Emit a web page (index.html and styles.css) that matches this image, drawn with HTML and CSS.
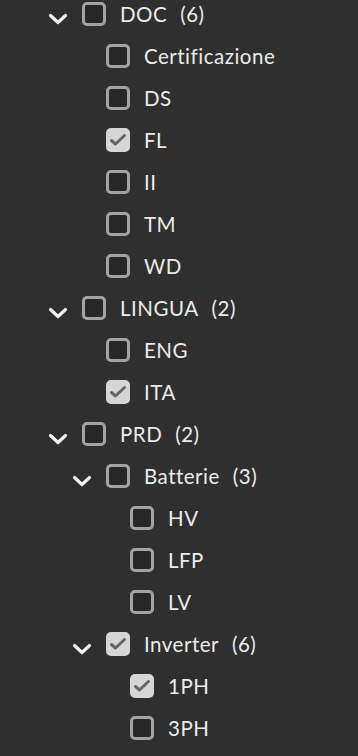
FILE: index.html
```html
<!DOCTYPE html>
<html lang="it">
<head>
<meta charset="utf-8">
<title>Filtri</title>
<link rel="stylesheet" href="styles.css">
</head>
<body>
<div class="tree">
  <div class="row l0"><span class="chev"><svg viewBox="0 0 20 12" width="20" height="12"><path d="M2.5 2.5 L10 9.5 L17.5 2.5" /></svg></span><span class="box"></span><span class="label">DOC<span class="count">(6)</span></span></div>
  <div class="row l1"><span class="slot"></span><span class="box"></span><span class="label">Certificazione</span></div>
  <div class="row l1"><span class="slot"></span><span class="box"></span><span class="label">DS</span></div>
  <div class="row l1"><span class="slot"></span><span class="box on"><svg viewBox="0 0 18 18" width="18" height="18"><path d="M2.5 9.5 L6.5 13 L15.5 4.5"/></svg></span><span class="label">FL</span></div>
  <div class="row l1"><span class="slot"></span><span class="box"></span><span class="label">II</span></div>
  <div class="row l1"><span class="slot"></span><span class="box"></span><span class="label">TM</span></div>
  <div class="row l1"><span class="slot"></span><span class="box"></span><span class="label">WD</span></div>
  <div class="row l0"><span class="chev"><svg viewBox="0 0 20 12" width="20" height="12"><path d="M2.5 2.5 L10 9.5 L17.5 2.5" /></svg></span><span class="box"></span><span class="label">LINGUA<span class="count">(2)</span></span></div>
  <div class="row l1"><span class="slot"></span><span class="box"></span><span class="label">ENG</span></div>
  <div class="row l1"><span class="slot"></span><span class="box on"><svg viewBox="0 0 18 18" width="18" height="18"><path d="M2.5 9.5 L6.5 13 L15.5 4.5"/></svg></span><span class="label">ITA</span></div>
  <div class="row l0"><span class="chev"><svg viewBox="0 0 20 12" width="20" height="12"><path d="M2.5 2.5 L10 9.5 L17.5 2.5" /></svg></span><span class="box"></span><span class="label">PRD<span class="count">(2)</span></span></div>
  <div class="row l1"><span class="chev"><svg viewBox="0 0 20 12" width="20" height="12"><path d="M2.5 2.5 L10 9.5 L17.5 2.5" /></svg></span><span class="box"></span><span class="label">Batterie<span class="count">(3)</span></span></div>
  <div class="row l2"><span class="slot"></span><span class="box"></span><span class="label">HV</span></div>
  <div class="row l2"><span class="slot"></span><span class="box"></span><span class="label">LFP</span></div>
  <div class="row l2"><span class="slot"></span><span class="box"></span><span class="label">LV</span></div>
  <div class="row l1"><span class="chev"><svg viewBox="0 0 20 12" width="20" height="12"><path d="M2.5 2.5 L10 9.5 L17.5 2.5" /></svg></span><span class="box on"><svg viewBox="0 0 18 18" width="18" height="18"><path d="M2.5 9.5 L6.5 13 L15.5 4.5"/></svg></span><span class="label">Inverter<span class="count">(6)</span></span></div>
  <div class="row l2"><span class="slot"></span><span class="box on"><svg viewBox="0 0 18 18" width="18" height="18"><path d="M2.5 9.5 L6.5 13 L15.5 4.5"/></svg></span><span class="label">1PH</span></div>
  <div class="row l2"><span class="slot"></span><span class="box"></span><span class="label">3PH</span></div>
</div>
</body>
</html>
```
FILE: styles.css
```css
html, body {
  margin: 0;
  padding: 0;
  background: #2f2f2f;
  overflow: hidden;
}
body {
  font-family: Lato, "Open Sans", sans-serif;
  font-size: 20.5px;
  color: #ebebeb;
}
.tree {
  margin-top: -7px;
  display: flex;
  flex-direction: column;
}
.row {
  height: 42px;
  display: flex;
  align-items: center;
}
.l0 { padding-left: 46px; }
.l1 { padding-left: 70px; }
.l2 { padding-left: 94px; }
.chev, .slot {
  width: 24px;
  height: 24px;
  flex: none;
  margin-right: 12px;
  display: flex;
  align-items: center;
  justify-content: center;
}
.chev svg {
  margin-top: 9px;
}
.chev path {
  fill: none;
  stroke: #f2f2f2;
  stroke-width: 3.2;
  stroke-linecap: round;
  stroke-linejoin: round;
}
.box {
  width: 24px;
  height: 24px;
  box-sizing: border-box;
  flex: none;
  border: 3px solid #a3a3a3;
  border-radius: 5px;
  background: #272727;
  display: flex;
  align-items: center;
  justify-content: center;
}
.box.on {
  background: #d6d6d6;
  border-color: #d6d6d6;
}
.box path {
  fill: none;
  stroke: #666666;
  stroke-width: 3;
  stroke-linecap: round;
  stroke-linejoin: round;
}
.label {
  margin-left: 14px;
  white-space: nowrap;
  letter-spacing: 0.5px;
}
.count {
  margin-left: 13px;
}
```
